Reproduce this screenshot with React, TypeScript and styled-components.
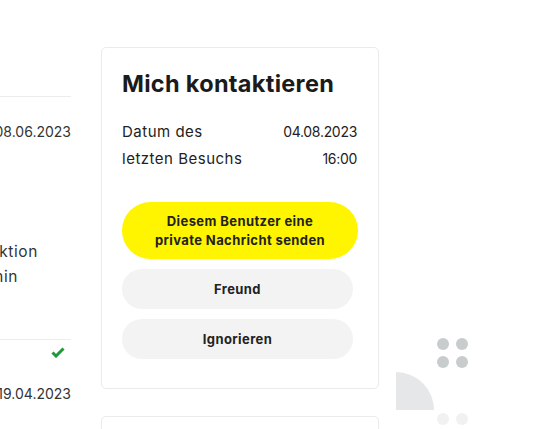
import React from 'react';
import styled, { createGlobalStyle } from 'styled-components';

const GlobalStyle = createGlobalStyle`
  html, body {
    margin: 0;
    padding: 0;
    background: #fff;
    overflow: hidden;
  }
  body {
    font-family: Inter, "Noto Sans", sans-serif;
    color: #1b1b1b;
  }
`;

interface IVisit {
  label: string[],
  date: string,
  time: string
}

const lastVisit: IVisit = {
  label: ['Datum des', 'letzten Besuchs'],
  date: '04.08.2023',
  time: '16:00'
};

export default function App() {
  return <>
    <GlobalStyle />
    <Page>
      <Feed>
        <Divider />
        <FeedDate>08.06.2023</FeedDate>
        <FeedText>
          <FeedLine $end={33}>Neue Reaktion</FeedLine>
          <FeedLine $end={53}>von Admin</FeedLine>
        </FeedText>
        <Divider />
        <FeedMeta>
          <Check viewBox="0 0 14 11">
            <path d="M1.5 5.5 L5 9 L12.5 1.5" fill="none" stroke="#1f9a3b" strokeWidth="3" />
          </Check>
        </FeedMeta>
        <FeedDate>19.04.2023</FeedDate>
      </Feed>

      <Side>
        <Card>
          <Title>Mich kontaktieren</Title>
          <InfoRow>
            <span>{lastVisit.label[0]}</span>
            <Value>{lastVisit.date}</Value>
          </InfoRow>
          <InfoRow>
            <span>{lastVisit.label[1]}</span>
            <Value>{lastVisit.time}</Value>
          </InfoRow>
          <Actions>
            <Button $primary>Diesem Benutzer eine<br />private Nachricht senden</Button>
            <Button>Freund</Button>
            <Button>Ignorieren</Button>
          </Actions>
        </Card>
        <Card $stub />
      </Side>

      <Deco width="80" height="120" viewBox="0 0 80 120">
        <circle cx="47" cy="24" r="6" fill="#c9cccd" />
        <circle cx="66" cy="24" r="6" fill="#c9cccd" />
        <circle cx="47" cy="42" r="6" fill="#c9cccd" />
        <circle cx="66" cy="42" r="6" fill="#c9cccd" />
        <path d="M0 52 A38 38 0 0 1 38 90 L0 90 Z" fill="#e6e7e9" />
        <circle cx="47" cy="99" r="6" fill="#f1f1f1" />
        <circle cx="66" cy="99" r="6" fill="#f1f1f1" />
      </Deco>
    </Page>
  </>
}

const Page = styled.div`
  display: flex;
  align-items: flex-start;
  gap: 30px;
  margin-left: -189px;
  width: 800px;
`

const Feed = styled.div`
  width: 260px;
  padding-top: 96px;
  display: flex;
  flex-direction: column;
  font-size: 14px;
  color: #333;
  text-align: right;
`

const Divider = styled.div`
  height: 1px;
  background: #ececec;
`

const FeedDate = styled.div`
  margin-top: 26px;
  line-height: 18px;
`

const FeedText = styled.div`
  margin-top: 98px;
  margin-bottom: 50px;
  font-size: 15.5px;
  letter-spacing: 0.6px;
  line-height: 25px;
`

const FeedLine = styled.div<{ $end: number }>`
  padding-right: ${p => p.$end}px;
`

const FeedMeta = styled.div`
  display: flex;
  justify-content: flex-end;
  padding: 7px 6px 0 0;
  height: 12px;
`

const Check = styled.svg`
  width: 14px;
  height: 11px;
`

const Side = styled.div`
  display: flex;
  flex-direction: column;
  gap: 27px;
  padding-top: 47px;
`

const Card = styled.div<{ $stub?: boolean }>`
  box-sizing: border-box;
  width: 278px;
  height: ${p => p.$stub ? '40px' : 'auto'};
  border: 1px solid #ebebeb;
  border-radius: 5px;
  padding: 20px 21px 29px 20px;
  background: #fff;
`

const Title = styled.h2`
  margin: 0 0 18px;
  font-size: 23.5px;
  font-weight: 700;
  line-height: 32px;
  letter-spacing: 0.3px;
`

const InfoRow = styled.div`
  display: flex;
  justify-content: space-between;
  align-items: baseline;
  font-size: 15px;
  letter-spacing: 0.5px;
  line-height: 27px;
  color: #222;
`

const Value = styled.span`
  font-size: 14px;
  letter-spacing: -0.3px;
`

const Actions = styled.div`
  display: flex;
  flex-direction: column;
  align-items: flex-start;
  gap: 10px;
  margin-top: 30px;
`

const Button = styled.button<{ $primary?: boolean }>`
  border: none;
  border-radius: 30px;
  font-family: Inter, "Noto Sans", sans-serif;
  font-size: 13px;
  font-weight: 700;
  letter-spacing: 0.4px;
  line-height: 19px;
  color: #222;
  width: ${p => p.$primary ? '236px' : '231px'};
  height: ${p => p.$primary ? '57px' : '40px'};
  background: ${p => p.$primary ? '#fff500' : '#f3f3f3'};
  cursor: pointer;
`

const Deco = styled.svg`
  margin-top: 320px;
  margin-left: -13px;
  flex-shrink: 0;
`
